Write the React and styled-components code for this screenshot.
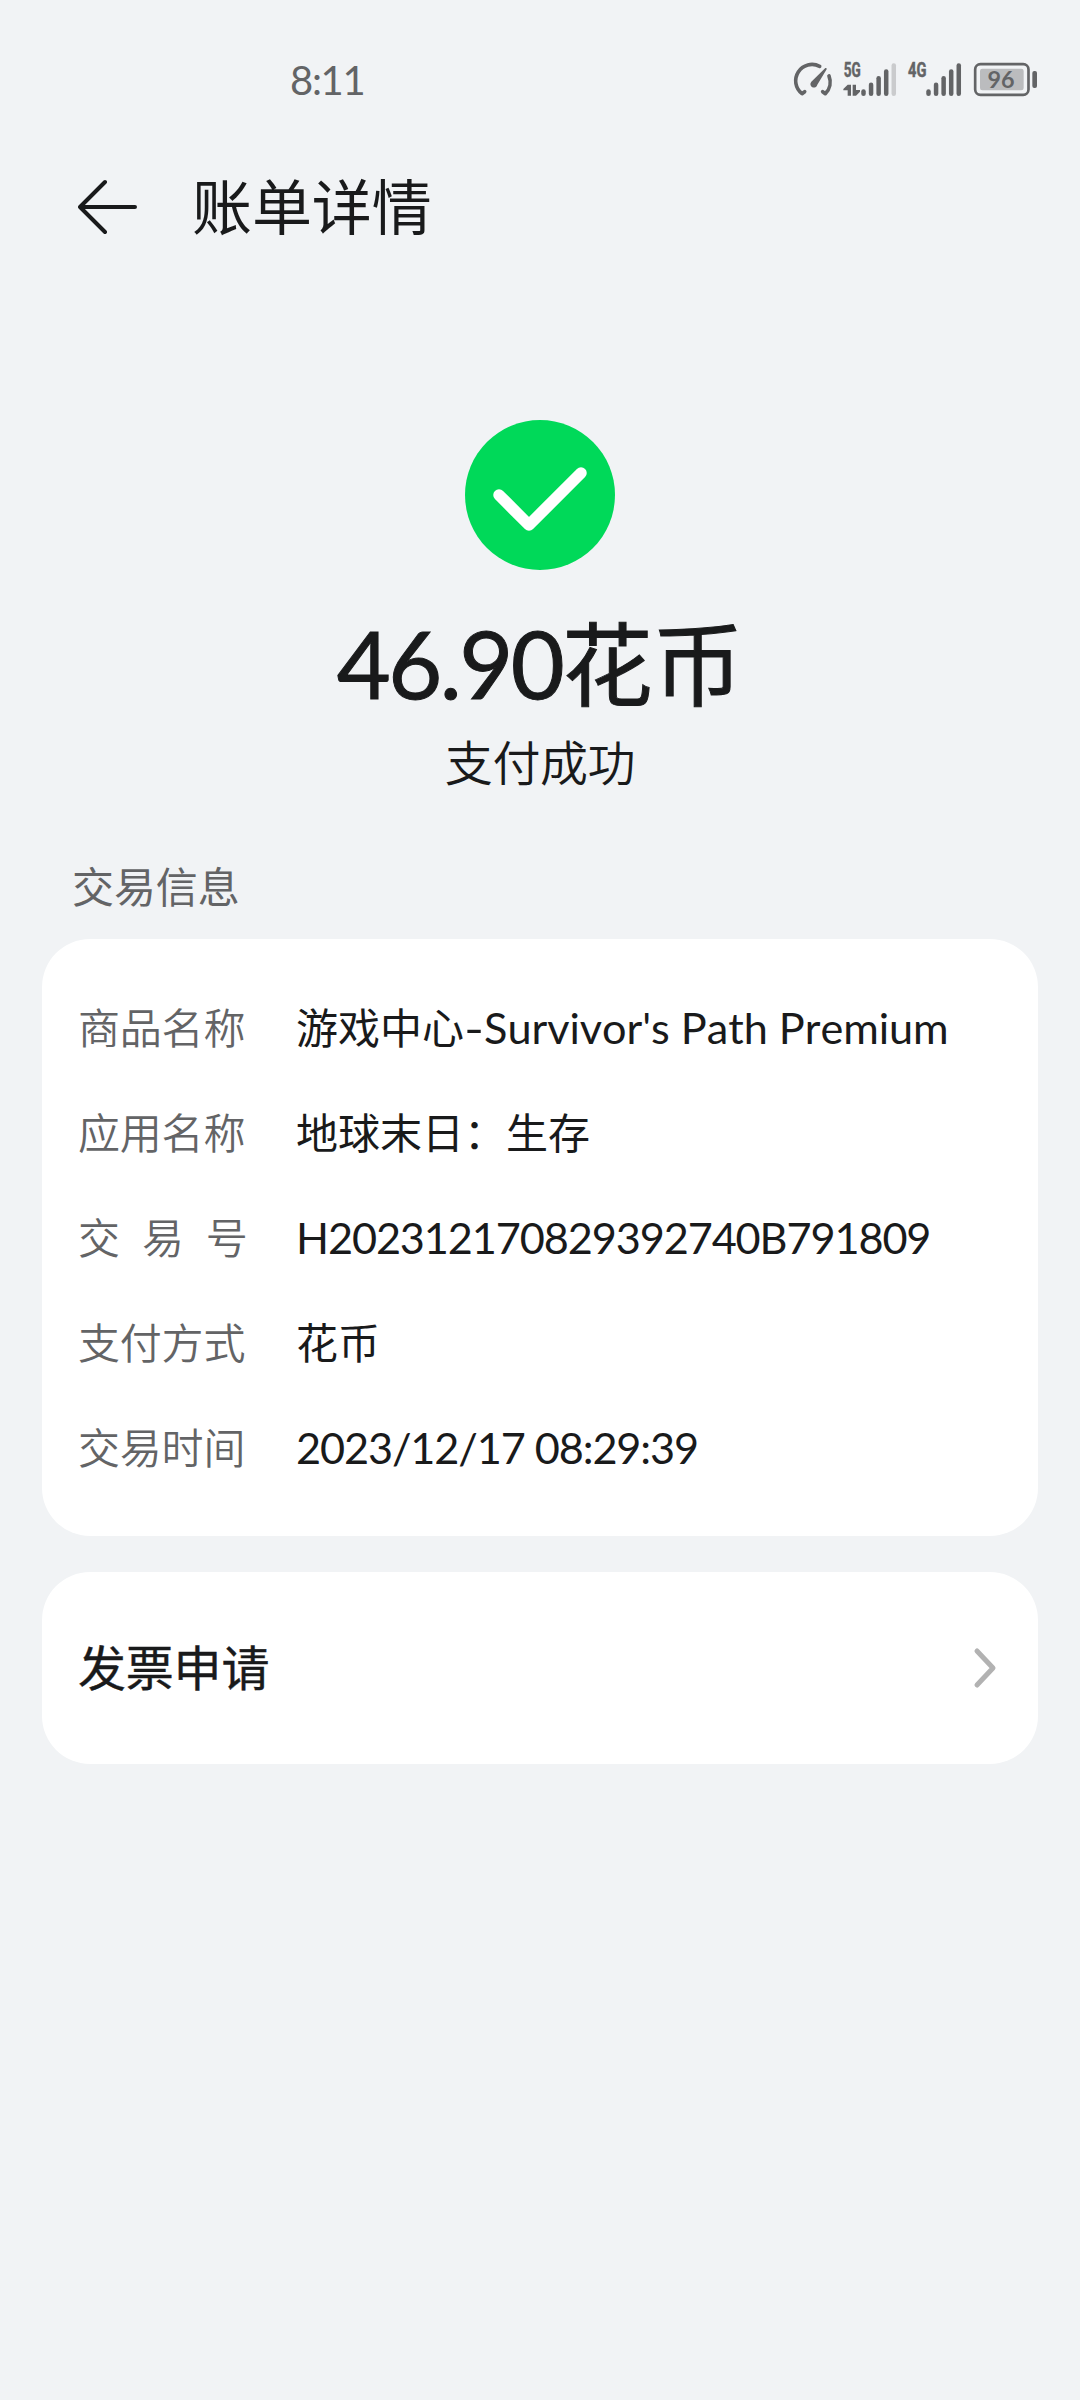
import React from "react";
import styled, { createGlobalStyle } from "styled-components";

const Global = createGlobalStyle`
  html, body { margin: 0; background: #f1f3f5; }
  * { box-sizing: border-box; }
`;

const ink = "#191a1b";
const grey = "#636466";
const cjk = `"Noto Sans CJK SC", sans-serif`;

const Page = styled.div`
  width: 1080px;
  height: 2400px;
  display: flex;
  flex-direction: column;
  background: #f1f3f5;
  color: ${ink};
  font-family: ${cjk};
  overflow: hidden;
`;

const StatusBar = styled.header`
  height: 132px;
  display: flex;
  justify-content: space-between;
  align-items: flex-start;
  padding: 60px 39px 0 290px;
`;

const Clock = styled.time`
  font: 400 40px/40px Lato, sans-serif;
  letter-spacing: -1.3px;
  color: ${grey};
`;

const StatusIcons = styled.div`
  display: flex;
  color: ${grey};
`;

const StatusIcon = styled.svg`
  display: block;
  width: ${(p) => p.$w}px;
  height: 40px;
  font-family: Roboto, sans-serif;
`;

const TitleBar = styled.div`
  height: 150px;
  display: flex;
  align-items: center;
  padding-left: 78px;
`;

const BackButton = styled.button`
  display: flex;
  width: 60px;
  height: 60px;
  padding: 0;
  border: 0;
  background: none;
  color: ${ink};
`;

const Title = styled.h1`
  margin: 0 0 7px 54px;
  font-size: 60px;
  line-height: 72px;
  font-weight: 400;
  letter-spacing: -0.1px;
`;

const Result = styled.section`
  display: flex;
  flex-direction: column;
  align-items: center;
  padding-top: 138px;
`;

const Badge = styled.svg`
  display: block;
  width: 150px;
  height: 150px;
`;

const Latin = styled.span`
  font-family: Lato, sans-serif;
  font-size: 1.03em;
  line-height: 1;
  font-kerning: none;
  letter-spacing: ${(p) => p.$track || "-0.0255em"};
`;

const Hyphen = styled.span`
  display: inline-block;
  padding: 0 2px;
  transform: scaleX(1.25);
`;

const Amount = styled.div`
  height: 120px;
  margin-top: 30px;
  font-size: 90.5px;
  line-height: 120px;
  font-weight: 400;
  -webkit-text-stroke: 1px currentColor;
  white-space: nowrap;
`;

const Outcome = styled.div`
  height: 60px;
  margin-top: 10px;
  font-size: 48px;
  line-height: 60px;
  font-weight: 350;
  letter-spacing: -0.4px;
`;

const SectionTitle = styled.h2`
  height: 60px;
  margin: 65px 0 0 72px;
  font-size: 42px;
  line-height: 60px;
  font-weight: 400;
  letter-spacing: -0.1px;
  color: ${grey};
`;

const Card = styled.section`
  flex: none;
  margin: 0 42px 36px;
  border-radius: 48px;
  background: #fff;
`;

const Details = styled(Card).attrs({ as: "dl" })`
  height: 597px;
  margin-top: 24px;
  padding: 34px 36px 0;
`;

const Row = styled.div`
  display: flex;
  height: 105px;
  font-size: 42px;
  line-height: 105px;
  white-space: nowrap;
`;

const Label = styled.dt`
  width: 218px;
  font-weight: 350;
  letter-spacing: -0.2px;
  word-spacing: ${(p) => (p.$spread ? "1.9px" : "0")};
  white-space: pre;
  color: ${grey};
`;

const Value = styled.dd`
  margin: 0;
  font-weight: 400;
`;

const Invoice = styled(Card)`
  height: 192px;
  display: flex;
  justify-content: space-between;
  align-items: center;
  padding: 0 41px 0 36px;
`;

const InvoiceLabel = styled.span`
  margin-bottom: 7px;
  font-size: 48px;
  line-height: 60px;
  font-weight: 400;
  -webkit-text-stroke: 0.4px currentColor;
  letter-spacing: -0.2px;
`;

const Chevron = styled.svg`
  display: block;
  width: 24px;
  height: 42px;
`;

const rows = [
  { label: "商品名称", value: <>游戏中心<Latin $track="-0.001em"><Hyphen>-</Hyphen>Survivor's Path Premium</Latin></> },
  { label: "应用名称", value: "地球末日：生存" },
  { label: "交  易  号", spread: true, value: <Latin>H202312170829392740B791809</Latin> },
  { label: "支付方式", value: "花币" },
  { label: "交易时间", value: <Latin>2023/12/17 08:29:39</Latin> },
];

const barTops = [118, 98, 78, 58, 40];

const Bars = ({ x, faded }) =>
  barTops.map((top, i) => (
    <line
      key={top}
      x1={x + i * 22.7}
      x2={x + i * 22.7}
      y1={top + 6.5}
      y2={131}
      stroke={faded && i === 4 ? "#cacbcd" : "currentColor"}
      strokeWidth="13.500"
      strokeLinecap="round"
    />
  ));

export default function App() {
  return (
    <Page>
      <Global />
      <StatusBar>
        <Clock>8:11</Clock>
        <StatusIcons>
          <StatusIcon $w={48} viewBox="34 30 144 120">
            <g fill="none" stroke="currentColor" strokeWidth="11" strokeLinecap="round" strokeLinejoin="round">
              <path d="M72 125 64 131A49 49 0 0 1 117 49" />
              <path d="M145 78A49 49 0 0 1 134 131L126 125" />
            </g>
            <path fill="currentColor" d="M134 54Q139 53 138 58L110 104A10.500 10.500 0 1 1 92 95Z" />
          </StatusIcon>
          <StatusIcon $w={64} viewBox="180 30 192 120">
            <text x="191" y="82" fontSize="58" fontWeight="700" fill="currentColor" stroke="currentColor" strokeWidth="1.500" textLength="51" lengthAdjust="spacingAndGlyphs">5G</text>
            <path fill="currentColor" d="M203 104H213V137H203V121H190V117ZM218 104H228V120H240V125L228 137H218Z" />
            <Bars x={250.500} faded />
          </StatusIcon>
          <StatusIcon $w={65} viewBox="372 30 195 120">
            <text x="384" y="82" fontSize="58" fontWeight="700" fill="currentColor" stroke="currentColor" strokeWidth="1.500" textLength="55" lengthAdjust="spacingAndGlyphs">4G</text>
            <Bars x={445.500} />
          </StatusIcon>
          <StatusIcon $w={72} viewBox="567 30 216 120">
            <rect x="585.500" y="42.500" width="160" height="92" rx="16" fill="none" stroke="currentColor" strokeWidth="8" />
            <rect x="600" y="56" width="131" height="65" rx="7" fill="#bbbcbe" />
            <rect x="757" y="63" width="14" height="51" rx="6" fill="currentColor" />
            <text x="663" y="113" textAnchor="middle" fontFamily="Lato" fontSize="70" fontWeight="700" fill="currentColor">96</text>
          </StatusIcon>
        </StatusIcons>
      </StatusBar>

      <TitleBar>
        <BackButton aria-label="返回">
          <svg width="60" height="60" viewBox="0 0 60 60" fill="none" stroke="currentColor" strokeWidth="4" strokeLinecap="round" strokeLinejoin="round">
            <path d="M57 30H2L27 5M2 30L27 55" />
          </svg>
        </BackButton>
        <Title>账单详情</Title>
      </TitleBar>

      <Result>
        <Badge viewBox="0 0 150 150">
          <circle cx="75" cy="75" r="75" fill="#00d959" />
          <path d="M34 75L64 105L116 53" fill="none" stroke="#fff" strokeWidth="11.500" strokeLinecap="round" strokeLinejoin="round" />
        </Badge>
        <Amount><Latin $track="-0.027em">46.90</Latin>花币</Amount>
        <Outcome>支付成功</Outcome>
      </Result>

      <SectionTitle>交易信息</SectionTitle>
      <Details>
        {rows.map((r) => (
          <Row key={r.label}>
            <Label $spread={r.spread}>{r.label}</Label>
            <Value>{r.value}</Value>
          </Row>
        ))}
      </Details>

      <Invoice>
        <InvoiceLabel>发票申请</InvoiceLabel>
        <Chevron viewBox="0 0 24 42" fill="none" stroke="#b2b2b2" strokeWidth="5" strokeLinecap="round" strokeLinejoin="round">
          <path d="M4 4L20 21L4 38" />
        </Chevron>
      </Invoice>
    </Page>
  );
}
